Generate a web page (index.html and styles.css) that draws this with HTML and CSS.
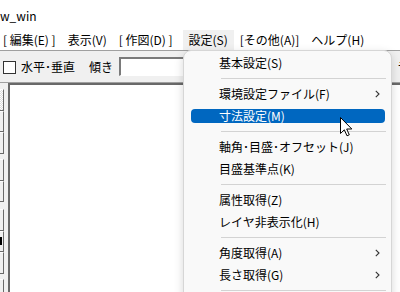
FILE: index.html
```html
<!DOCTYPE html>
<html lang="ja">
<head>
    <meta charset="UTF-8">
    <title>jww_win</title>
    <link rel="stylesheet" href="styles.css">
</head>
<body>
<div class="app">
    <div class="titlebar">w_win</div>
    <div class="menubar">
        <span class="menu-item first">[ 編集(E) ]</span>
        <span class="menu-item">表示(V)</span>
        <span class="menu-item">[ 作図(D) ]</span>
        <span class="menu-item open">設定(S)</span>
        <span class="menu-item">[その他(A)]</span>
        <span class="menu-item">ヘルプ(H)</span>
    </div>
    <div class="toolbar">
        <span class="checkbox"></span>
        <span class="tool-label">水平･垂直</span>
        <span class="tool-label slope">傾き</span>
        <span class="slope-input"></span>
        <span class="tool-label tail">ラ</span>
    </div>
    <div class="main">
        <div class="side-strip">
            <div class="side-btn checked h22"></div>
            <div class="side-btn h21"></div>
            <div class="side-btn h22"></div>
            <div class="side-btn h22 gap5"></div>
            <div class="side-btn h21"></div>
            <div class="side-btn h22 gap7"></div>
            <div class="side-btn h21 mark"></div>
            <div class="side-btn h22"></div>
            <div class="side-btn h22 gap5"></div>
        </div>
        <div class="canvas"></div>
    </div>

    <!-- open 設定 menu -->
    <div class="dropdown">
        <div class="dd-item">基本設定(S)</div>
        <div class="dd-sep"></div>
        <div class="dd-item">環境設定ファイル(F)<svg class="chev" width="5" height="8" viewBox="0 0 5 8"><polyline points="0.8,0.8 4,4 0.8,7.2" fill="none" stroke="#333" stroke-width="1.1"/></svg></div>
        <div class="dd-item active">寸法設定(M)</div>
        <div class="dd-sep"></div>
        <div class="dd-item">軸角･目盛･オフセット(J)</div>
        <div class="dd-item">目盛基準点(K)</div>
        <div class="dd-sep"></div>
        <div class="dd-item">属性取得(Z)</div>
        <div class="dd-item">レイヤ非表示化(H)</div>
        <div class="dd-sep"></div>
        <div class="dd-item">角度取得(A)<svg class="chev" width="5" height="8" viewBox="0 0 5 8"><polyline points="0.8,0.8 4,4 0.8,7.2" fill="none" stroke="#333" stroke-width="1.1"/></svg></div>
        <div class="dd-item">長さ取得(G)<svg class="chev" width="5" height="8" viewBox="0 0 5 8"><polyline points="0.8,0.8 4,4 0.8,7.2" fill="none" stroke="#333" stroke-width="1.1"/></svg></div>
        <div class="dd-sep"></div>
    </div>

    <svg class="cursor" width="13" height="20" viewBox="0 0 13 20">
        <path d="M0.5,0.5 L0.5,16.5 L4.3,12.8 L7,18.8 L9.3,17.8 L6.7,12 L11.8,12 Z" fill="#fff" stroke="#000" stroke-width="1" stroke-linejoin="miter"/>
    </svg>
</div>
</body>
</html>
```

FILE: styles.css
```css
html, body {
    margin: 0;
    overflow: hidden;
}

body {
    font-family: "Noto Sans CJK JP", "Noto Sans", sans-serif;
    font-size: 12px;
    color: #000;
    background-color: #fff;
}

.app {
    width: 400px;
    height: 292px;
    overflow: hidden;
    position: relative;
    display: flex;
    flex-direction: column;
}

.titlebar {
    height: 30px;
    flex-shrink: 0;
    line-height: 32px;
    background-color: #fff;
    white-space: nowrap;
}

.menubar {
    height: 20px;
    flex-shrink: 0;
    display: flex;
    align-items: center;
    background-color: #fff;
    white-space: nowrap;
}

.menu-item {
    height: 20px;
    line-height: 19px;
    padding: 0 6px;
}

.menu-item.first {
    margin-left: -3px;
}

.menu-item.open {
    margin-left: 4px;
    background-color: #f0f0f0;
}

.toolbar {
    height: 31px;
    flex-shrink: 0;
    display: flex;
    align-items: center;
    background-color: #f0f0f0;
    border-top: 1px solid #a0a0a0;
    border-bottom: 1px solid #a0a0a0;
    white-space: nowrap;
}

.checkbox {
    width: 11px;
    height: 11px;
    flex-shrink: 0;
    margin: 1px 5px 0 3px;
    border: 1px solid #333;
    background-color: #fff;
}

.tool-label {
    line-height: 14px;
}

.tool-label.slope {
    margin-left: 14px;
}

.slope-input {
    width: 218px;
    height: 16px;
    margin-left: 6px;
    flex-shrink: 0;
    background-color: #fff;
    border-top: 2px solid #7a7a7a;
    border-left: 2px solid #7a7a7a;
    border-bottom: 1px solid #fff;
    border-right: 1px solid #fff;
}

.tool-label.tail {
    margin-left: 57px;
}

.main {
    flex: 1;
    display: flex;
}

.side-strip {
    width: 8px;
    flex-shrink: 0;
    padding-top: 6px;
    box-sizing: border-box;
    background-color: #f0f0f0;
}

.side-btn {
    width: 4px;
    box-sizing: border-box;
    background-color: #f0f0f0;
    border-top: 1px solid #fff;
    border-right: 1px solid #696969;
    border-bottom: 1px solid #696969;
    position: relative;
}

.side-btn.h22 { height: 22px; }
.side-btn.h21 { height: 21px; }
.side-btn.gap5 { margin-top: 5px; }
.side-btn.gap7 { margin-top: 7px; }

.side-btn.checked {
    background-color: #fff;
    background-image: repeating-conic-gradient(#dcdcdc 0 25%, #fff 0 50%);
    background-size: 2px 2px;
}

.side-btn.mark::after {
    content: "";
    position: absolute;
    left: 0;
    top: 5px;
    width: 2px;
    height: 8px;
    background-color: #000;
}

.canvas {
    flex: 1;
    background-color: #fff;
    border-top: 2px solid #696969;
    border-left: 2px solid #696969;
}

.dropdown {
    position: absolute;
    left: 183px;
    top: 50px;
    width: 209px;
    height: 260px;
    box-sizing: border-box;
    padding-top: 1px;
    background-color: #f9f9f9;
    border: 1px solid #d6d6d6;
    border-radius: 8px;
    box-shadow: 0 3px 10px rgba(0, 0, 0, 0.16);
    white-space: nowrap;
}

.dd-item {
    height: 22px;
    line-height: 22px;
    padding-left: 35px;
    position: relative;
}

.dd-item.active {
    height: 14px;
    line-height: 14px;
    margin: 4px 6px 4px 7px;
    padding-left: 28px;
    color: #fff;
    background-color: #0067c0;
    border-radius: 4px;
}

.chev {
    position: absolute;
    left: 191px;
    top: 7px;
}

.dd-sep {
    height: 9px;
    position: relative;
}

.dd-sep::after {
    content: "";
    position: absolute;
    left: 37px;
    right: 5px;
    top: 4px;
    height: 1px;
    background-color: #d3d3d3;
}

.cursor {
    position: absolute;
    left: 340px;
    top: 117px;
}
```
